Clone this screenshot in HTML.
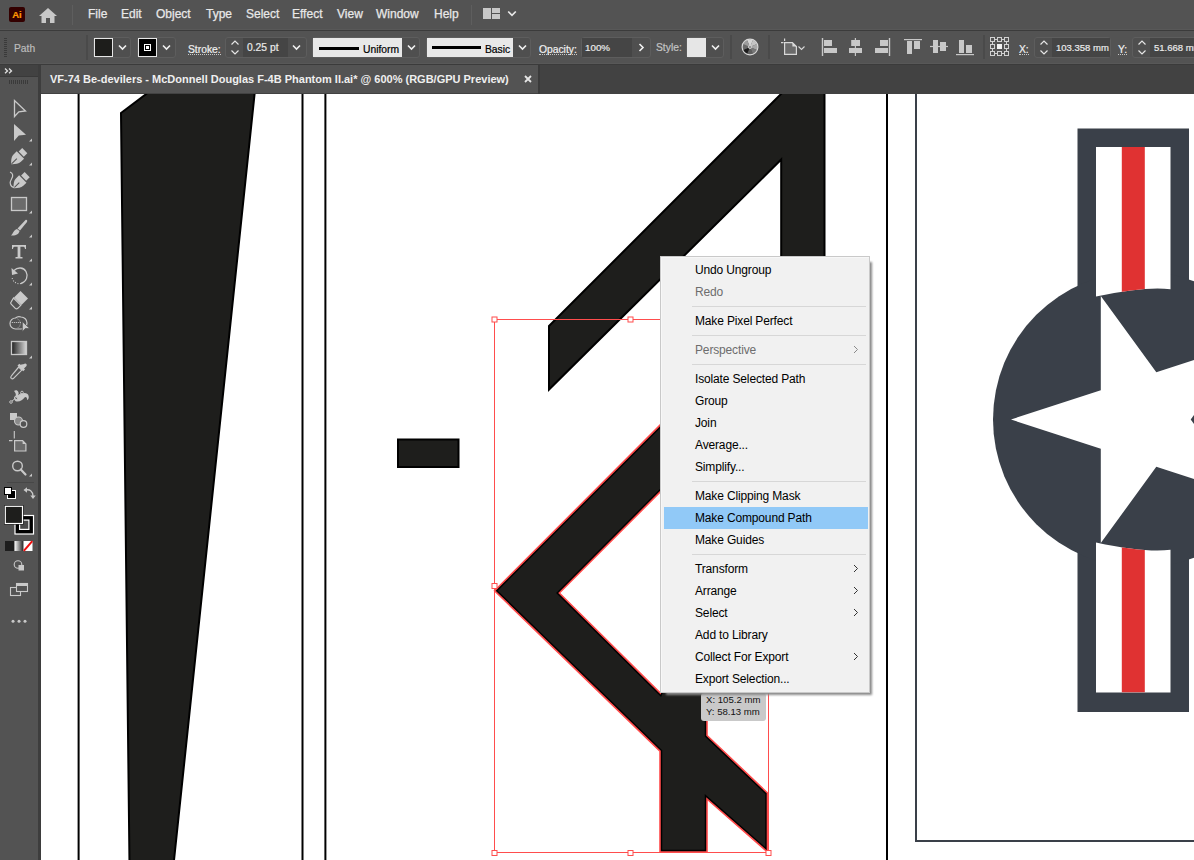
<!DOCTYPE html>
<html><head><meta charset="utf-8">
<style>
*{margin:0;padding:0;box-sizing:border-box}
html,body{width:1194px;height:860px;overflow:hidden;background:#535353;font-family:"Liberation Sans",sans-serif}
.a{position:absolute}
.mt{position:absolute;top:6.5px;font-size:12px;color:#e8e8e8;line-height:15px;-webkit-text-stroke:0.25px #e8e8e8}
.lbl{position:absolute;font-size:10.3px;color:#d6d6d6;line-height:13px;white-space:nowrap;-webkit-text-stroke:0.2px currentColor}
.ul{border-bottom:1px dotted #c8c8c8;line-height:9px!important;padding-bottom:0!important}
.fld{position:absolute;background:#464646;border:1px solid #4a4a4a;border-radius:2px}
.dd{position:absolute;background:#4f4f4f;border:1px solid #5d5d5d;border-radius:3px}
.mi{position:absolute;left:34px;font-size:12px;color:#000;line-height:14px;letter-spacing:-0.15px;white-space:nowrap}
.dis{color:#6d6d6d}
.sep{position:absolute;left:31px;right:3px;height:1px;background:#d7d7d7}
.arr{position:absolute;left:193px;width:6px;height:6px;border-top:1px solid #333;border-right:1px solid #333;transform:rotate(45deg)}
</style></head><body>
<!-- menubar -->
<div class="a" style="left:0;top:0;width:1194px;height:30px;background:#535353"></div>
<div class="a" style="left:0;top:29px;width:1194px;height:1px;background:#585858"></div><div class="a" style="left:0;top:30px;width:1194px;height:1px;background:#3b3b3b"></div>
<!-- Ai logo -->
<div class="a" style="left:9px;top:7px;width:16px;height:15px;background:#330000;border-radius:2px"></div>
<div class="a" style="left:9.5px;top:8.5px;width:15px;font-size:9.5px;font-weight:bold;color:#ff9a00;line-height:11px;text-align:center;-webkit-text-stroke:0.2px #ff9a00">Ai</div>
<!-- home -->
<svg class="a" style="left:38px;top:7px" width="20" height="17" viewBox="0 0 20 17"><path d="M10 1 L19 9 L16.5 9 L16.5 16 L12 16 L12 11 L8 11 L8 16 L3.5 16 L3.5 9 L1 9 Z" fill="#c8c8c8"/></svg>
<div class="a" style="left:71.5px;top:5px;width:1.5px;height:20px;background:#5e5e5e"></div>
<div class="mt" style="left:88px">File</div>
<div class="mt" style="left:121px">Edit</div>
<div class="mt" style="left:156px">Object</div>
<div class="mt" style="left:206px">Type</div>
<div class="mt" style="left:246px">Select</div>
<div class="mt" style="left:292px">Effect</div>
<div class="mt" style="left:337px">View</div>
<div class="mt" style="left:376px">Window</div>
<div class="mt" style="left:434px">Help</div>
<div class="a" style="left:470.5px;top:5px;width:1.5px;height:20px;background:#5e5e5e"></div>
<div class="a" style="left:483px;top:8px;width:8px;height:11px;background:#c8c8c8"></div>
<div class="a" style="left:492px;top:8px;width:8px;height:5px;background:#c8c8c8"></div>
<div class="a" style="left:492px;top:14px;width:8px;height:5px;background:#c8c8c8"></div>
<svg class="a" style="left:507px;top:10px" width="10" height="7"><path d="M1.2 1.5 L5 5.3 L8.8 1.5" stroke="#e8e8e8" stroke-width="1.7" fill="none"/></svg>

<!-- control bar -->

<div class="a" style="left:0;top:31px;width:1194px;height:32px;background:#535353"></div>
<div class="a" style="left:0;top:63px;width:1194px;height:1px;background:#585858"></div><div class="a" style="left:0;top:64px;width:1194px;height:1px;background:#3b3b3b"></div>
<!-- grip -->
<svg class="a" style="left:4px;top:38px" width="4" height="20"><g fill="#3a3a3a">
<rect x="0" y="0" width="3" height="1"/><rect x="0" y="2" width="3" height="1"/><rect x="0" y="4" width="3" height="1"/><rect x="0" y="6" width="3" height="1"/><rect x="0" y="8" width="3" height="1"/><rect x="0" y="10" width="3" height="1"/><rect x="0" y="12" width="3" height="1"/><rect x="0" y="14" width="3" height="1"/><rect x="0" y="16" width="3" height="1"/><rect x="0" y="18" width="3" height="1"/></g></svg>
<div class="lbl" style="left:14px;top:42px;color:#bcbcbc">Path</div>
<div class="a" style="left:86px;top:35px;width:2px;height:25px;background:#4a4a4a"></div>
<!-- fill -->
<div class="dd" style="left:93px;top:37px;width:38px;height:21px"></div>
<div class="a" style="left:94px;top:38px;width:19px;height:19px;border:1px solid #e6e6e6;background:#1d1d1b"></div>
<svg class="a" style="left:118px;top:44px" width="9" height="7"><path d="M1 1.5 L4.5 5 L8 1.5" stroke="#f0f0f0" stroke-width="1.6" fill="none"/></svg>
<!-- stroke -->
<div class="dd" style="left:137px;top:37px;width:39px;height:21px"></div>
<div class="a" style="left:138px;top:38px;width:19px;height:19px;border:1px solid #e6e6e6;background:#000"></div>
<div class="a" style="left:144px;top:44px;width:7px;height:7px;border:1px solid #fff;background:#000"></div>
<div class="a" style="left:146px;top:46px;width:3px;height:3px;background:#fff"></div>
<svg class="a" style="left:162px;top:44px" width="9" height="7"><path d="M1 1.5 L4.5 5 L8 1.5" stroke="#f0f0f0" stroke-width="1.6" fill="none"/></svg>
<!-- Stroke: -->
<div class="lbl ul" style="left:188px;top:45px;color:#f0f0f0">Stroke:</div>
<div class="dd" style="left:225px;top:37px;width:82px;height:21px"></div>
<div class="fld" style="left:243px;top:38px;width:45px;height:19px;border:none;border-radius:0;background:#454545"></div>
<svg class="a" style="left:230px;top:40px" width="10" height="16"><path d="M1.5 4.5 L5 1 L8.5 4.5 M1.5 10.5 L5 14 L8.5 10.5" stroke="#e6e6e6" stroke-width="1.2" fill="none"/></svg>
<div class="lbl" style="left:247px;top:41px;color:#eaeaea">0.25 pt</div>
<svg class="a" style="left:292px;top:44px" width="9" height="7"><path d="M1 1.5 L4.5 5 L8 1.5" stroke="#f0f0f0" stroke-width="1.6" fill="none"/></svg>
<!-- Uniform -->
<div class="dd" style="left:312px;top:37px;width:108px;height:21px"></div>
<div class="a" style="left:313px;top:38px;width:89px;height:19px;background:#e8e8e8"></div>
<div class="a" style="left:319px;top:47px;width:40px;height:3px;background:#000"></div>
<div class="lbl" style="left:363px;top:43px;color:#000">Uniform</div>
<svg class="a" style="left:407px;top:44px" width="9" height="7"><path d="M1 1.5 L4.5 5 L8 1.5" stroke="#f0f0f0" stroke-width="1.6" fill="none"/></svg>
<!-- Basic -->
<div class="dd" style="left:426px;top:37px;width:105px;height:21px"></div>
<div class="a" style="left:427px;top:38px;width:86px;height:19px;background:#e8e8e8"></div>
<div class="a" style="left:432px;top:46px;width:49px;height:3px;background:#000"></div>
<div class="lbl" style="left:485px;top:43px;color:#000">Basic</div>
<svg class="a" style="left:518px;top:44px" width="9" height="7"><path d="M1 1.5 L4.5 5 L8 1.5" stroke="#f0f0f0" stroke-width="1.6" fill="none"/></svg>
<!-- Opacity -->
<div class="lbl ul" style="left:539px;top:45px;color:#f0f0f0">Opacity:</div>
<div class="dd" style="left:581px;top:37px;width:70px;height:21px"></div>
<div class="a" style="left:582px;top:38px;width:50px;height:19px;background:#454545"></div>
<div class="lbl" style="left:585px;top:40.5px;color:#eaeaea;font-size:9.8px">100%</div>
<svg class="a" style="left:638px;top:43px" width="7" height="10"><path d="M1.5 1 L5 4.5 L1.5 8" stroke="#f0f0f0" stroke-width="1.6" fill="none"/></svg>
<!-- Style -->
<div class="lbl" style="left:656px;top:41px;color:#c4c4c4">Style:</div>
<div class="dd" style="left:686px;top:37px;width:38px;height:21px"></div>
<div class="a" style="left:687px;top:38px;width:19px;height:19px;background:#e6e6e6"></div>
<svg class="a" style="left:711px;top:44px" width="9" height="7"><path d="M1 1.5 L4.5 5 L8 1.5" stroke="#f0f0f0" stroke-width="1.6" fill="none"/></svg>
<div class="a" style="left:730px;top:35px;width:2px;height:24px;background:#4a4a4a"></div>
<!-- recolor -->
<svg class="a" style="left:741px;top:38px" width="18" height="18" viewBox="0 0 18 18">
<path d="M9 9 L6.09 1.98 A7.6 7.6 0 0 1 11.91 1.98 Z" fill="#d6d6d6"/>
<path d="M9 9 L11.91 1.98 A7.6 7.6 0 0 1 16.02 6.09 Z" fill="#c4c4c4"/>
<path d="M9 9 L16.02 6.09 A7.6 7.6 0 0 1 16.02 11.91 Z" fill="#a8a8a8"/>
<path d="M9 9 L16.02 11.91 A7.6 7.6 0 0 1 11.91 16.02 Z" fill="#777777"/>
<path d="M9 9 L11.91 16.02 A7.6 7.6 0 0 1 6.09 16.02 Z" fill="#5e5e5e"/>
<path d="M9 9 L6.09 16.02 A7.6 7.6 0 0 1 1.98 11.91 Z" fill="#1c1c1c"/>
<path d="M9 9 L1.98 11.91 A7.6 7.6 0 0 1 1.98 6.09 Z" fill="#6a6a6a"/>
<path d="M9 9 L1.98 6.09 A7.6 7.6 0 0 1 6.09 1.98 Z" fill="#9c9c9c"/>
<circle cx="9" cy="9" r="7.9" fill="none" stroke="#d8d8d8" stroke-width="1.2"/>
<circle cx="9" cy="9" r="1.6" fill="#8a8a8a" stroke="#d8d8d8" stroke-width="0.8"/></svg>
<div class="a" style="left:768px;top:35px;width:2px;height:24px;background:#4a4a4a"></div>
<!-- transform -->
<svg class="a" style="left:780px;top:38px" width="26" height="18" viewBox="780 38 26 18">
<path d="M784.6 38.5 V41 M781 42.6 H783.5" stroke="#d8d8d8" stroke-width="1.2"/>
<path d="M784.6 42.6 H792.4 L796.4 46.6 V54.4 H784.6 Z" fill="#6b6b6b" stroke="#d8d8d8" stroke-width="1.2"/>
<path d="M792.4 42.6 V46.6 H796.4 Z" fill="#d8d8d8"/>
<path d="M798.5 46.5 L801.5 49.5 L804.5 46.5" stroke="#d8d8d8" stroke-width="1.1" fill="none"/></svg>
<!-- align icons -->
<svg class="a" style="left:800px;top:30px" width="200" height="34" viewBox="800 30 200 34">
<g fill="#c8c8c8">
<rect x="821.8" y="38" width="1.4" height="18"/><rect x="824" y="40" width="8" height="6"/><rect x="824" y="48" width="13" height="5"/>
<rect x="854.8" y="38" width="1.2" height="18"/><rect x="851.2" y="40" width="8.8" height="6"/><rect x="849" y="48" width="13" height="5"/>
<rect x="888.8" y="38" width="1.4" height="18"/><rect x="880" y="40" width="8" height="6"/><rect x="875" y="48" width="13" height="5"/>
<rect x="904" y="39" width="18" height="1.2"/><rect x="907" y="41" width="5" height="13"/><rect x="914" y="41" width="6" height="8"/>
<rect x="930" y="45.9" width="18" height="1.2"/><rect x="933" y="40" width="5" height="13"/><rect x="940" y="42" width="6" height="9"/>
<rect x="956" y="54" width="18" height="1.2"/><rect x="959" y="40" width="5" height="13"/><rect x="966" y="45" width="6" height="8"/>
</g></svg>
<div class="a" style="left:983px;top:35px;width:2px;height:24px;background:#4a4a4a"></div>
<!-- ref point -->
<svg class="a" style="left:989px;top:36px" width="21" height="21" viewBox="0 0 21 21">
<g fill="none" stroke="#d0d0d0" stroke-width="1">
<rect x="1.5" y="1.5" width="4" height="4"/><rect x="8.5" y="1.5" width="4" height="4"/><rect x="15.5" y="1.5" width="4" height="4"/>
<rect x="1.5" y="8.5" width="4" height="4"/><rect x="15.5" y="8.5" width="4" height="4"/>
<rect x="1.5" y="15.5" width="4" height="4"/><rect x="8.5" y="15.5" width="4" height="4"/><rect x="15.5" y="15.5" width="4" height="4"/>
<path d="M5.5 3.5 H8.5 M12.5 3.5 H15.5 M5.5 17.5 H8.5 M12.5 17.5 H15.5 M3.5 5.5 V8.5 M3.5 12.5 V15.5 M17.5 5.5 V8.5 M17.5 12.5 V15.5"/>
</g><rect x="8" y="8" width="5" height="5" fill="#f0f0f0"/></svg>
<div class="lbl ul" style="left:1019px;top:45px;color:#f0f0f0">X:</div>
<div class="dd" style="left:1034px;top:37px;width:77px;height:21px"></div>
<div class="a" style="left:1052px;top:38px;width:58px;height:19px;background:#454545"></div>
<svg class="a" style="left:1039px;top:40px" width="10" height="16"><path d="M1.5 4.5 L5 1 L8.5 4.5 M1.5 10.5 L5 14 L8.5 10.5" stroke="#e6e6e6" stroke-width="1.2" fill="none"/></svg>
<div class="lbl" style="left:1056px;top:40.5px;color:#eaeaea;font-size:9.5px">103.358 mm</div>
<div class="lbl ul" style="left:1118px;top:45px;color:#f0f0f0">Y:</div>
<div class="dd" style="left:1132px;top:37px;width:80px;height:21px"></div>
<div class="a" style="left:1150px;top:38px;width:60px;height:19px;background:#454545"></div>
<svg class="a" style="left:1137px;top:40px" width="10" height="16"><path d="M1.5 4.5 L5 1 L8.5 4.5 M1.5 10.5 L5 14 L8.5 10.5" stroke="#e6e6e6" stroke-width="1.2" fill="none"/></svg>
<div class="lbl" style="left:1154px;top:40.5px;color:#eaeaea;font-size:9.5px">51.668 mm</div>


<!-- tab row -->
<div class="a" style="left:0;top:65px;width:1194px;height:29px;background:#424242"></div>
<div class="a" style="left:41px;top:65px;width:497px;height:28px;background:#535353"></div><div class="a" style="left:538px;top:65px;width:2px;height:29px;background:#3b3b3b"></div>

<div class="a" style="left:50px;top:72px;font-size:11px;font-weight:bold;color:#efefef;line-height:14px;white-space:nowrap">VF-74 Be-devilers - McDonnell Douglas F-4B Phantom II.ai* @ 600% (RGB/GPU Preview)</div>
<svg class="a" style="left:524px;top:75px" width="8" height="8"><path d="M1 1 L7 7 M7 1 L1 7" stroke="#e6e6e6" stroke-width="1.8"/></svg>
<!-- toolbar -->
<div class="a" style="left:0;top:65px;width:38px;height:795px;background:#535353"></div>
<div class="a" style="left:0;top:65px;width:38px;height:11px;background:#424242"></div><div class="a" style="left:0;top:76px;width:38px;height:1px;background:#393939"></div>
<div class="a" style="left:38px;top:65px;width:3px;height:795px;background:#3d3d3d"></div>

<svg class="a" style="left:0;top:0" width="40" height="860" viewBox="0 0 40 860">
<g fill="#c9c9c9" stroke="none">
<!-- >> -->
<path d="M5 68.6 L7.5 70.9 L5 73.2 M9 68.6 L11.5 70.9 L9 73.2" fill="none" stroke="#e0e0e0" stroke-width="1.3"/>
<!-- grip -->
<g fill="#3a3a3a"><rect x="9" y="80" width="1" height="4"/><rect x="11" y="80" width="1" height="4"/><rect x="13" y="80" width="1" height="4"/><rect x="15" y="80" width="1" height="4"/><rect x="17" y="80" width="1" height="4"/><rect x="19" y="80" width="1" height="4"/><rect x="21" y="80" width="1" height="4"/><rect x="23" y="80" width="1" height="4"/><rect x="25" y="80" width="1" height="4"/><rect x="27" y="80" width="1" height="4"/></g>
<!-- selection -->
<path d="M14.5 100.5 L14.5 116.5 L18.8 111.8 L25.5 111 Z" fill="none" stroke="#c9c9c9" stroke-width="1.3" stroke-linejoin="miter"/>
<!-- direct selection -->
<path d="M14 124 L14 141 L18.8 135.5 L26 134.8 Z"/>
<path d="M32 138.5 L32 141.5 L29 141.5 Z"/>
<!-- pen -->
<g transform="translate(11.2 164.2) rotate(-45)">
<path d="M0 0 C2.5 -2.5 5 -5.2 8.5 -5.2 L13 -5.2 L13 5.2 L8.5 5.2 C5 5.2 2.5 2.5 0 0 Z"/>
<rect x="14.2" y="-3.6" width="5" height="7.2"/>
<path d="M0.5 0 L8 0" stroke="#535353" stroke-width="1"/>
</g>
<path d="M32 162.5 L32 165.5 L29 165.5 Z"/>
<!-- curvature -->
<g transform="translate(13.6 188.2) rotate(-45)">
<path d="M0 0 C2.5 -2.5 5 -5.2 8.5 -5.2 L13 -5.2 L13 5.2 L8.5 5.2 C5 5.2 2.5 2.5 0 0 Z"/>
<rect x="14.2" y="-3.6" width="5" height="7.2"/>
<path d="M0.5 0 L8 0" stroke="#535353" stroke-width="1"/>
</g>
<path d="M10 172 C13 173 13.5 176 11.5 179 C9.5 182 9.5 187 14.5 187.5" fill="none" stroke="#c9c9c9" stroke-width="1.2"/>
<!-- rect -->
<rect x="11.5" y="197.5" width="15" height="13" fill="#6b6b6b" stroke="#c9c9c9" stroke-width="1.3"/>
<path d="M32 210.5 L32 213.5 L29 213.5 Z"/>
<!-- brush -->
<path d="M25.5 220 C27 219.5 27.5 220.5 27 222 L20 230.5 L17.5 228.5 Z"/>
<path d="M17 229 L19.5 231 C19 234 16 236 11 235.5 C13 234 13.5 230 17 229 Z"/>
<path d="M32 234.5 L32 237.5 L29 237.5 Z"/>
<!-- type -->
<path d="M12 245 H26 V249 H25 C24.8 247 24 246.8 22.5 246.8 H20.4 V257 H22.5 V258.6 H15.5 V257 H17.6 V246.8 H15.5 C14 246.8 13.2 247 13 249 H12 Z"/>
<path d="M32 258.5 L32 261.5 L29 261.5 Z"/>
<!-- rotate -->
<path d="M14 270.5 C17.5 267 23.5 267 26 271.5 C28.5 276 26.5 282 21 283.5" fill="none" stroke="#c9c9c9" stroke-width="1.3" stroke-dasharray="0"/>
<path d="M21 283.5 C17 284.5 13 282 12 277.5" fill="none" stroke="#c9c9c9" stroke-width="1.2" stroke-dasharray="1 1.6"/>
<path d="M11.5 268 L12 275 L18 273.5 Z"/>
<path d="M32 282.5 L32 285.5 L29 285.5 Z"/>
<!-- eraser -->
<path d="M20.5 291 L28 298.5 L21.5 305 L14 297.5 Z"/>
<path d="M13.5 298 L20.8 305.3 L17.8 308.3 C17 309 16 309 15.3 308.3 L11.2 304.2 C10.5 303.5 10.5 302.5 11.2 301.8 Z" fill="none" stroke="#c9c9c9" stroke-width="1.2"/>
<path d="M32 306.5 L32 309.5 L29 309.5 Z"/>
<!-- shape builder -->
<path d="M15.5 318 A5.5 5.5 0 1 0 15.5 329 L21 329 A6 6 0 0 0 21 317 A5.5 5.5 0 0 0 15.5 318 Z" fill="none" stroke="#c9c9c9" stroke-width="1.2"/>
<path d="M17 318.6 A5.2 5.2 0 0 1 17 328.4" fill="none" stroke="#8a8a8a" stroke-width="0.8"/>
<g fill="#e0e0e0"><circle cx="12.3" cy="322.5" r="0.6"/><circle cx="14.3" cy="322.5" r="0.6"/><circle cx="16.3" cy="322.5" r="0.6"/><circle cx="18.3" cy="322.5" r="0.6"/><circle cx="20.3" cy="322.5" r="0.6"/></g>
<path d="M22.3 321.5 L22.3 332 L25.2 328.6 L29.8 328.6 Z" stroke="#535353" stroke-width="0.8"/>
<!-- gradient -->
<defs><linearGradient id="g1" x1="0" x2="1" y1="0" y2="0"><stop offset="0" stop-color="#1e1e1e"/><stop offset="1" stop-color="#d8d8d8"/></linearGradient>
<linearGradient id="g2" x1="0" x2="1"><stop offset="0" stop-color="#fff"/><stop offset="1" stop-color="#222"/></linearGradient></defs>
<rect x="11.5" y="341.5" width="15" height="13" fill="url(#g1)" stroke="#c9c9c9" stroke-width="1.3"/>
<path d="M32 355.5 L32 358.5 L29 358.5 Z"/>
<!-- eyedropper -->
<path d="M24.3 364 C25.5 362.8 27.5 364.5 26.5 366 L24 368.5 L25 369.5 L23.2 371.3 L17.5 365.6 L19.3 363.8 L20.3 364.8 Z"/>
<path d="M18.7 367 L21.8 370.1 L13.8 378.1 C13 378.9 11.8 378.9 11.2 378.3 C10.6 377.6 10.6 376.6 11.4 375.8 Z" fill="none" stroke="#c9c9c9" stroke-width="1.2"/>
<!-- puppet/blend -->
<path d="M14 391 C17 389 20 392 18 396 C21 393 25 392 27.5 394 C29.5 396 29 399.5 27 400 C27.5 398 26 396 24.5 397.5 C23 399.5 20 402 16.5 401.5 C14 401 13.5 397 15.5 396 C16.5 394 15 392 14 391 Z"/>
<circle cx="16" cy="398" r="1.6" fill="#535353" stroke="#c9c9c9" stroke-width="0.9"/>
<path d="M11 402 L22 392.5" stroke="#c9c9c9" stroke-width="1"/>
<circle cx="11" cy="402" r="1.3" fill="#535353" stroke="#c9c9c9" stroke-width="0.9"/>
<circle cx="22" cy="392.5" r="1.3" fill="#535353" stroke="#c9c9c9" stroke-width="0.9"/>
<!-- live paint -->
<rect x="10" y="413" width="7" height="7"/>
<circle cx="18.5" cy="421" r="4" fill="#8a8a8a" stroke="#c9c9c9" stroke-width="1.1"/>
<circle cx="23.5" cy="424" r="3.3" fill="#535353" stroke="#c9c9c9" stroke-width="1.2"/>
<!-- artboard -->
<path d="M14.3 431 V438.5 M9 440.6 H12.5" stroke="#c9c9c9" stroke-width="1.1"/>
<path d="M14.6 440.6 H22.6 L25.9 443.9 V451 H14.6 Z" fill="#6b6b6b" stroke="#c9c9c9" stroke-width="1.2"/>
<path d="M22.6 440.6 V443.9 H25.9 Z" fill="#c9c9c9"/>
<!-- zoom -->
<circle cx="17.5" cy="466" r="4.8" fill="none" stroke="#c9c9c9" stroke-width="1.4"/>
<path d="M20.8 469.5 L25.5 474.5" stroke="#c9c9c9" stroke-width="2.2" stroke-linecap="round"/>
<path d="M32 473.5 L32 476.5 L29 476.5 Z"/>
<!-- separator -->
<rect x="7" y="482" width="27" height="1" fill="#474747"/>
<!-- default fill stroke -->
<rect x="7.5" y="490.5" width="8" height="8" fill="#000" stroke="#fff" stroke-width="1"/>
<rect x="4.5" y="487.5" width="7" height="7" fill="#fff" stroke="#000" stroke-width="1"/>
<!-- swap -->
<path d="M25.5 490 C30 489 33 491.5 33 496" fill="none" stroke="#c9c9c9" stroke-width="1.3"/>
<path d="M23.5 490 L27 487.3 L27 492.7 Z M33 499 L30.3 495.5 L35.7 495.5 Z"/>
<!-- fill/stroke big -->
<rect x="15" y="515.5" width="18.5" height="18.5" fill="#000" stroke="#fff" stroke-width="1.2"/>
<rect x="19.6" y="520.1" width="9.3" height="9.3" fill="#4a4a4a" stroke="#fff" stroke-width="1.2"/>
<rect x="4.2" y="505.2" width="19.4" height="19.4" fill="#000"/>
<rect x="5.3" y="506.3" width="17.2" height="17.2" fill="#1e1e1c" stroke="#fff" stroke-width="1.2"/>
<!-- color modes -->
<rect x="5" y="541" width="9.5" height="10" fill="#1e1e1e"/>
<rect x="14.5" y="541" width="9" height="10" fill="url(#g2)"/>
<rect x="23.5" y="541" width="9" height="10" fill="#fff"/>
<path d="M23.8 550.8 L32.3 541.2" stroke="#f01010" stroke-width="2"/>
<!-- draw mode -->
<circle cx="18" cy="564.5" r="3.8" fill="none" stroke="#c9c9c9" stroke-width="1.1"/>
<rect x="18.5" y="565" width="5.5" height="5.5" fill="#c9c9c9"/>
<!-- screen mode -->
<rect x="10.5" y="587.5" width="10" height="8" fill="none" stroke="#c9c9c9" stroke-width="1.1"/>
<rect x="16.5" y="583.5" width="11" height="8" fill="#535353" stroke="#c9c9c9" stroke-width="1.1"/>
<rect x="17" y="584" width="10" height="2" fill="#c9c9c9"/>
<!-- more -->
<circle cx="13" cy="621.3" r="1.5"/><circle cx="19" cy="621.3" r="1.5"/><circle cx="25" cy="621.3" r="1.5"/>
</g></svg>
<!-- canvas -->
<div class="a" style="left:41px;top:94px;width:1153px;height:766px;background:#fff;overflow:hidden">
<svg class="a" style="left:-41px;top:-94px" width="1194" height="860" viewBox="0 0 1194 860">
<!-- artboard lines -->
<rect x="77.6" y="80" width="2" height="800" fill="#000"/>
<rect x="301.5" y="80" width="2" height="800" fill="#000"/>
<rect x="324.4" y="80" width="2" height="800" fill="#000"/>
<rect x="886" y="80" width="2" height="800" fill="#000"/>
<path d="M916 80 V841 H1200" fill="none" stroke="#3a4049" stroke-width="2"/>
<!-- shape 1 -->
<path d="M121 113 L151.5 90 L255 70 L255 90 L173.5 865 L129.5 865 Z" fill="#1e1e1c" stroke="#000" stroke-width="2"/>
<!-- shape 2 -->
<path d="M549 326 L787.5 87.5 L824.5 87.5 L824.5 300 L781.2 300 L781.2 159.5 L549 389.5 Z" fill="#1e1e1c" stroke="#000" stroke-width="2"/>
<!-- rect -->
<rect x="398" y="439.5" width="60.5" height="27.5" fill="#1e1e1c" stroke="#000" stroke-width="2"/>
<!-- K shape -->
<defs><clipPath id="kc"><path d="M494.6 590.8 L766 319 L800 319 L800 600 L707 700 L707 735.5 L767.5 793 L767.5 852 L707 799 L707 852 L660 852 L660 751.2 Z M559.3 593 L700 452 L700 600 L660.3 693 Z" fill-rule="evenodd" clip-rule="evenodd"/></clipPath></defs>
<path d="M494.6 590.8 L766 319 L800 319 L800 600 L707 700 L707 735.5 L767.5 793 L767.5 852 L707 799 L707 852 L660 852 L660 751.2 Z M559.3 593 L700 452 L700 600 L660.3 693 Z" fill="#1e1e1c" fill-rule="evenodd" stroke="#000" stroke-width="4.5" clip-path="url(#kc)"/>
<path d="M494.6 590.8 L766 319 L800 319 L800 600 L707 700 L707 735.5 L767.5 793 L767.5 852 L707 799 L707 852 L660 852 L660 751.2 Z M559.3 593 L700 452 L700 600 L660.3 693 Z" fill="none" stroke="#ff4c4c" stroke-width="1.6"/>
<!-- selection box -->
<rect x="494.5" y="319.5" width="274" height="533" fill="none" stroke="#ff4d4d" stroke-width="1"/>
<g fill="#fff" stroke="#ff4d4d" stroke-width="1">
<rect x="492" y="317" width="5" height="5"/><rect x="628" y="317" width="5" height="5"/><rect x="766" y="317" width="5" height="5"/>
<rect x="492" y="583.5" width="5" height="5"/><rect x="766" y="583.5" width="5" height="5"/>
<rect x="492" y="850.5" width="5" height="5"/><rect x="628" y="850.5" width="5" height="5"/><rect x="766" y="850.5" width="5" height="5"/>
</g>
<!-- roundel -->
<g fill="#3a4049">
<rect x="1077.5" y="128.5" width="111.5" height="200"/>
<rect x="1077.5" y="510" width="111.5" height="202"/>
<circle cx="1141" cy="419.5" r="148"/>
</g>
<defs><clipPath id="cb1"><path d="M1096 147 H1170.5 V289.3 Q1146 286 1096 296.6 Z"/></clipPath>
<clipPath id="cb2"><path d="M1096 692.5 H1170.5 V549.7 Q1146 553 1096 542.4 Z"/></clipPath></defs>
<path d="M1096 147 H1170.5 V289.3 Q1146 286 1096 296.6 Z" fill="#fff"/>
<rect x="1121.8" y="147" width="23" height="150" fill="#e03232" clip-path="url(#cb1)"/>
<path d="M1096 692.5 H1170.5 V549.7 Q1146 553 1096 542.4 Z" fill="#fff"/>
<rect x="1121.8" y="540" width="23" height="152.5" fill="#e03232" clip-path="url(#cb2)"/>
<path id="star" d="M1011.0 419.5 L1100.8 448.7 L1100.8 543.1 L1156.3 466.7 L1246.2 495.9 L1190.7 419.5 L1246.2 343.1 L1156.3 372.3 L1100.8 295.9 L1100.8 390.3 Z" fill="#fff"/>
</svg></div>


<!-- tooltip -->
<div class="a" style="left:701px;top:693px;width:65px;height:28px;background:#c9c9c9;border-radius:3px"></div>
<div class="a" style="left:706px;top:694px;font-size:9.6px;line-height:12px;color:#111;white-space:nowrap">X: 105.2 mm<br>Y: 58.13 mm</div>
<!-- context menu -->
<div class="a" style="left:666px;top:262px;width:205.5px;height:432.5px;background:#8a8a8a;filter:blur(1.3px)"></div>
<div class="a" style="left:660px;top:256px;width:210px;height:437px;background:#f1f1f1;border:1px solid #c9c9c9;box-shadow:inset 1px 1px 0 #f7f7f7">
<div class="mi" style="top:6px">Undo Ungroup</div>
<div class="mi dis" style="top:28px">Redo</div>
<div class="sep" style="top:49px"></div>
<div class="mi" style="top:57px">Make Pixel Perfect</div>
<div class="sep" style="top:78px"></div>
<div class="mi dis" style="top:86px">Perspective</div>
<svg class="a" style="left:191.5px;top:88px" width="6" height="9"><path d="M1 1 L4.5 4.5 L1 8" stroke="#8a8a8a" stroke-width="1" fill="none"/></svg>
<div class="sep" style="top:107px"></div>
<div class="mi" style="top:115px">Isolate Selected Path</div>
<div class="mi" style="top:137px">Group</div>
<div class="mi" style="top:159px">Join</div>
<div class="mi" style="top:181px">Average...</div>
<div class="mi" style="top:203px">Simplify...</div>
<div class="sep" style="top:224px"></div>
<div class="mi" style="top:232px">Make Clipping Mask</div>
<div class="a" style="left:3px;top:250px;width:204px;height:22px;background:#91c9f7"></div>
<div class="mi" style="top:254px">Make Compound Path</div>
<div class="mi" style="top:276px">Make Guides</div>
<div class="sep" style="top:297px"></div>
<div class="mi" style="top:305px">Transform</div>
<svg class="a" style="left:191.5px;top:307px" width="6" height="9"><path d="M1 1 L4.5 4.5 L1 8" stroke="#333" stroke-width="1" fill="none"/></svg>
<div class="mi" style="top:327px">Arrange</div>
<svg class="a" style="left:191.5px;top:329px" width="6" height="9"><path d="M1 1 L4.5 4.5 L1 8" stroke="#333" stroke-width="1" fill="none"/></svg>
<div class="mi" style="top:349px">Select</div>
<svg class="a" style="left:191.5px;top:351px" width="6" height="9"><path d="M1 1 L4.5 4.5 L1 8" stroke="#333" stroke-width="1" fill="none"/></svg>
<div class="mi" style="top:371px">Add to Library</div>
<div class="mi" style="top:393px">Collect For Export</div>
<svg class="a" style="left:191.5px;top:395px" width="6" height="9"><path d="M1 1 L4.5 4.5 L1 8" stroke="#333" stroke-width="1" fill="none"/></svg>
<div class="mi" style="top:415px">Export Selection...</div>
</div>
</body></html>
